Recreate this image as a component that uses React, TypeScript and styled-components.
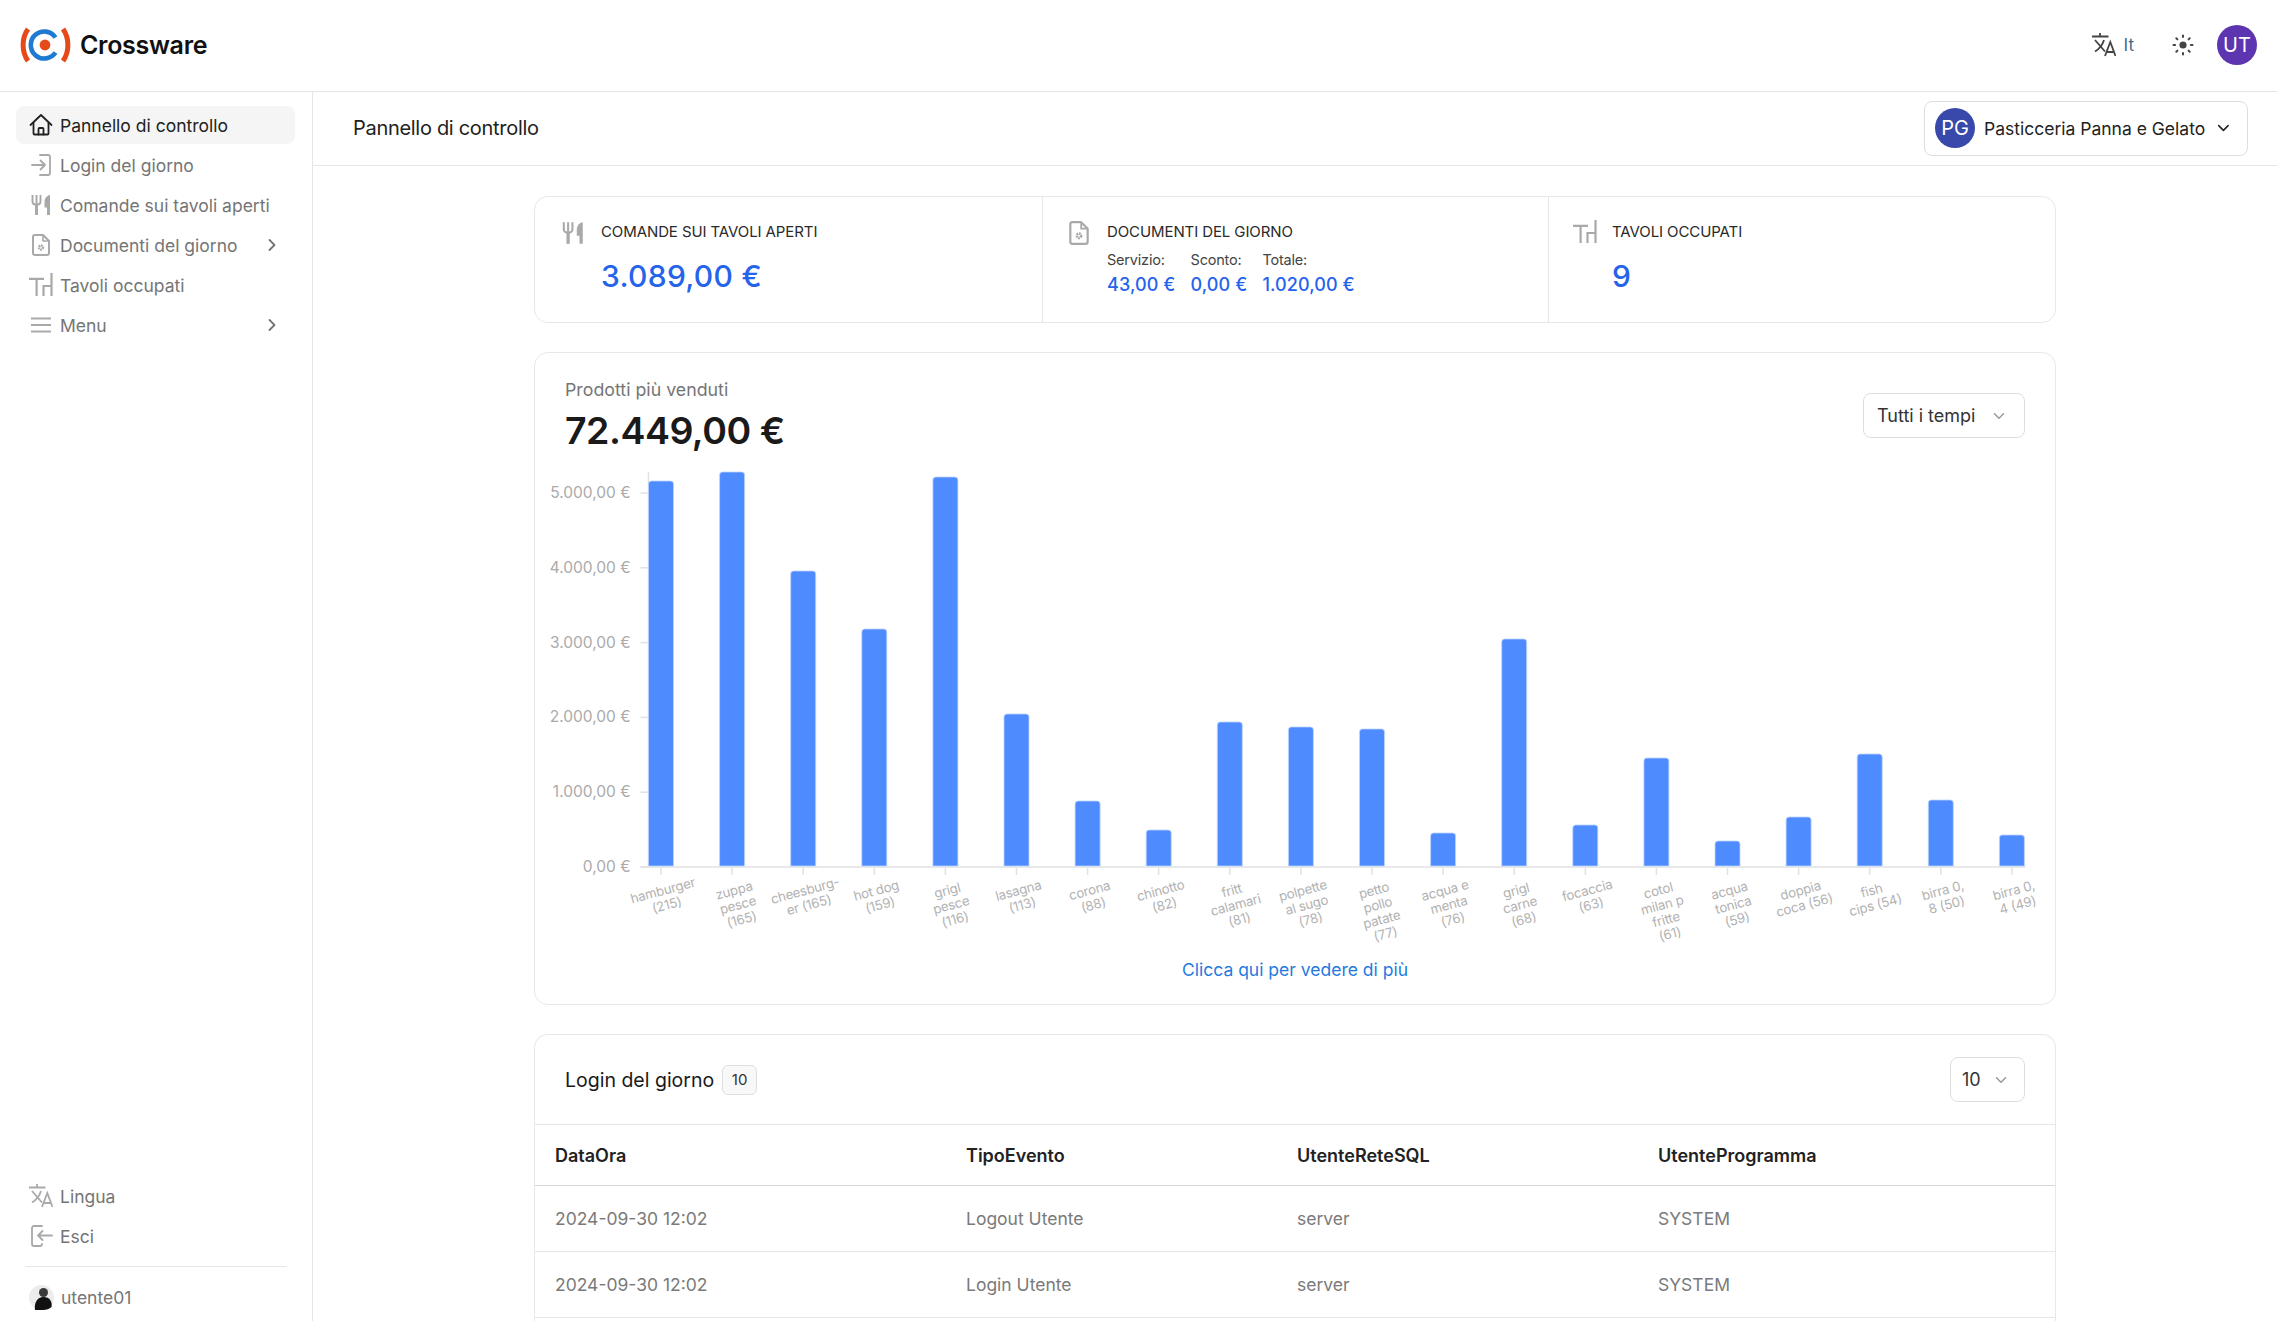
import React from "react";
import styled, { createGlobalStyle } from "styled-components";
import { ChevronDown, ChevronRight } from "lucide-react";

const GlobalStyle = createGlobalStyle`
  html, body {
    margin: 0;
    height: 100%;
    background: #fff;
    font-family: Inter, "Noto Sans", sans-serif;
    color: #222;
  }
  * {
    box-sizing: border-box;
  }
`;

const Page = styled.div`
  height: 100vh;
  overflow: hidden;
  display: flex;
  flex-direction: column;
`;

const TopBar = styled.header`
  height: 91.5px;
  flex: none;
  display: flex;
  align-items: center;
  justify-content: space-between;
  padding: 0 20px;
  border-bottom: 1.5px solid #e6e6e6;
`;

const Brand = styled.div`
  display: flex;
  align-items: center;
  gap: 9px;
  font-size: 25px;
  font-weight: 600;
  letter-spacing: -0.3px;
  color: #111;
`;

const TopActions = styled.div`
  display: flex;
  align-items: center;
`;

const LangButton = styled.div`
  display: flex;
  align-items: center;
  gap: 8px;
  font-size: 17px;
  color: #3d6b8c;
  margin-right: 38px;
  svg {
    color: #444;
  }
`;

const Avatar = styled.div<{ $bg: string }>`
  width: 40px;
  height: 40px;
  border-radius: 50%;
  flex: none;
  display: flex;
  align-items: center;
  justify-content: center;
  background: ${(p) => p.$bg};
  color: #fff;
  font-size: 20px;
`;

const SunWrap = styled.div`
  display: flex;
  color: #444;
  margin-right: 23px;
`;

const Body = styled.div`
  flex: 1;
  display: flex;
  min-height: 0;
`;

const Sidebar = styled.aside`
  width: 313px;
  flex: none;
  display: flex;
  flex-direction: column;
  padding: 14.5px 16px 0;
  border-right: 1.5px solid #e6e6e6;
`;

const NavList = styled.nav`
  display: flex;
  flex-direction: column;
  gap: 2px;
`;

const NavItem = styled.div<{ $active?: boolean }>`
  height: 38px;
  width: 279px;
  display: flex;
  align-items: center;
  gap: 7px;
  padding: 0 13px 0 13px;
  border-radius: 8px;
  font-size: 17.5px;
  background: ${(p) => (p.$active ? "#f5f5f5" : "transparent")};
  color: ${(p) => (p.$active ? "#222" : "#757575")};
  svg.nav {
    color: ${(p) => (p.$active ? "#222" : "#a9a9a9")};
  }
`;

const NavLabel = styled.span`
  flex: 1;
  white-space: nowrap;
`;

const SideBottom = styled.div`
  margin-top: auto;
  padding-bottom: 11px;
`;

const SideRule = styled.hr`
  border: 0;
  border-top: 1.5px solid #e6e6e6;
  margin: 11px 9px 18px;
  width: 262px;
`;

const UserRow = styled.div`
  display: flex;
  align-items: center;
  gap: 7px;
  padding-left: 13px;
  font-size: 17.5px;
  color: #757575;
`;

const Main = styled.main`
  flex: 1;
  min-width: 0;
  display: flex;
  flex-direction: column;
`;

const SubBar = styled.div`
  height: 74.5px;
  flex: none;
  display: flex;
  align-items: center;
  justify-content: space-between;
  padding: 0 29px 0 40px;
  border-bottom: 1.5px solid #e6e6e6;
`;

const PageTitle = styled.h1`
  margin: 0;
  font-size: 20px;
  font-weight: 400;
  letter-spacing: -0.3px;
  color: #222;
`;

const StoreSelect = styled.div`
  width: 324px;
  height: 55px;
  display: flex;
  align-items: center;
  gap: 9px;
  padding: 0 14px 0 10px;
  border: 1.5px solid #dedede;
  border-radius: 8px;
  font-size: 17.5px;
  color: #222;
`;

const StoreName = styled.span`
  flex: 1;
  white-space: nowrap;
`;

const Content = styled.div`
  flex: 1;
  min-height: 0;
  overflow: hidden;
  width: 1522px;
  margin: 0 auto;
  padding: 30px 0 0;
  display: flex;
  flex-direction: column;
  gap: 29px;
`;

const Card = styled.section`
  flex: none;
  background: #fff;
  border: 1.5px solid #e8e8e8;
  border-radius: 14px;
`;

const KpiCard = styled(Card)`
  display: grid;
  grid-template-columns: 508px 506px 1fr;
  height: 127px;
`;

const KpiCell = styled.div<{ $pad: number; $last?: boolean }>`
  display: flex;
  gap: 15px;
  padding: 23px 0 0 ${(p) => p.$pad}px;
  border-right: ${(p) => (p.$last ? "0" : "1.5px solid #e6e6e6")};
  svg {
    color: #a9a9a9;
    flex: none;
  }
`;

const KpiTitle = styled.div`
  margin-top: 2px;
  font-size: 15px;
  line-height: 20px;
  letter-spacing: -0.1px;
  color: #2a2a2a;
`;

const KpiValue = styled.div`
  margin-top: 15px;
  font-size: 30px;
  line-height: 38px;
  font-weight: 500;
  letter-spacing: 0.3px;
  color: #2563eb;
`;

const KpiColumns = styled.div`
  display: flex;
  gap: 15px;
  margin-top: 8px;
`;

const KpiColumn = styled.div`
  display: flex;
  flex-direction: column;
`;

const KpiLabel = styled.span`
  font-size: 14.5px;
  line-height: 20px;
  letter-spacing: -0.2px;
  color: #444;
`;

const KpiAmount = styled.span`
  margin-top: 4px;
  font-size: 18px;
  line-height: 22px;
  font-weight: 500;
  letter-spacing: 0.1px;
  color: #2563eb;
`;

const ChartCard = styled(Card)`
  height: 653px;
  display: flex;
  flex-direction: column;
`;

const ChartHead = styled.div`
  display: flex;
  justify-content: space-between;
  align-items: flex-start;
  padding: 25px 30px 0 30px;
  height: 111.5px;
  flex: none;
`;

const ChartCaption = styled.div`
  font-size: 17.8px;
  line-height: 24px;
  color: #757575;
`;

const ChartTotal = styled.div`
  margin-top: 7px;
  font-size: 37.5px;
  line-height: 44px;
  font-weight: 600;
  letter-spacing: -0.5px;
  color: #1a1a1a;
`;

const SelectBox = styled.div<{ $w: number }>`
  width: ${(p) => p.$w}px;
  height: 45px;
  display: flex;
  align-items: center;
  justify-content: space-between;
  padding: 0 16px 0 13px;
  border: 1.5px solid #dedede;
  border-radius: 8px;
  font-size: 18px;
  color: #333;
  svg {
    color: #999;
  }
`;

const TimeSelect = styled(SelectBox)`
  margin-top: 15px;
`;

const PageSizeSelect = styled(SelectBox)`
  padding: 0 14px 0 11px;
`;

const ChartSvg = styled.svg`
  display: block;
  flex: none;
`;

const MoreLink = styled.a`
  display: block;
  text-align: center;
  font-size: 17.5px;
  color: #1f7ae0;
  margin-top: 4px;
`;

const TableCard = styled(Card)`
  border-bottom: 0;
  border-radius: 14px 14px 0 0;
`;

const TableHead = styled.div`
  height: 90px;
  display: flex;
  align-items: center;
  justify-content: space-between;
  padding: 0 30px;
  border-bottom: 1.5px solid #e6e6e6;
`;

const TableTitle = styled.div`
  display: flex;
  align-items: center;
  gap: 8px;
  font-size: 19.5px;
  color: #1a1a1a;
`;

const CountBadge = styled.span`
  width: 35px;
  height: 30px;
  display: flex;
  align-items: center;
  justify-content: center;
  font-size: 15px;
  background: #f8f8f8;
  border: 1.5px solid #dedede;
  border-radius: 6px;
  color: #333;
`;

const LogTable = styled.div`
  display: flex;
  flex-direction: column;
`;

const LogRow = styled.div<{ $head?: boolean }>`
  height: ${(p) => (p.$head ? "61px" : "66px")};
  display: grid;
  grid-template-columns: 411px 331px 361px 1fr;
  align-items: center;
  padding-left: 20px;
  font-size: ${(p) => (p.$head ? "18px" : "17.5px")};
  font-weight: ${(p) => (p.$head ? 600 : 400)};
  color: ${(p) => (p.$head ? "#222" : "#7a7a7a")};
  border-bottom: 1.5px solid ${(p) => (p.$head ? "#d8d8d8" : "#e6e6e6")};
`;

const Logo = () => (
  <svg width="51" height="36" viewBox="0 0 51 36" fill="none">
    <path d="M8 2C1.5 11 1.5 25 8 34" stroke="#e64a19" strokeWidth="5" />
    <path d="M43 2c6.5 9 6.5 23 0 32" stroke="#e64a19" strokeWidth="5" />
    <path d="M35.5 10.5a13.5 13.5 0 1 0 0 15" stroke="#1f7ad1" strokeWidth="4.6" />
    <circle cx="25" cy="18" r="5.4" fill="#e64a19" />
  </svg>
);

const HomeIcon = () => (
  <svg className="nav" width="24" height="24" viewBox="0 0 24 24" fill="none" stroke="currentColor" strokeWidth="1.8" strokeLinejoin="round" strokeLinecap="round">
    <path d="M1.5 12 12 2l10.5 10" />
    <path d="M4.5 10v10.5a1 1 0 0 0 1 1h13a1 1 0 0 0 1-1V10" />
    <path d="M9.5 21.5V16a1 1 0 0 1 1-1h3a1 1 0 0 1 1 1v5.5" />
  </svg>
);

const LoginIcon = () => (
  <svg className="nav" width="24" height="24" viewBox="0 0 24 24" fill="none" stroke="currentColor" strokeWidth="1.8" strokeLinecap="round" strokeLinejoin="round">
    <path d="M11 2h8a2 2 0 0 1 2 2v16a2 2 0 0 1-2 2h-8" />
    <path d="M3 12h13M11.5 7.5 16 12l-4.5 4.5" />
  </svg>
);

const ForkIcon = ({ size = 24 }: { size?: number }) => (
  <svg className="nav" width={size} height={size} viewBox="0 0 24 24" fill="none" stroke="currentColor" strokeWidth="1.9">
    <path d="M3.5 2v6.5a3 3 0 0 0 3 3h2a3 3 0 0 0 3-3V2M7.5 2v9" />
    <path d="M7.5 11v11" strokeWidth="3" />
    <path d="M21 2c-3 .5-5.5 3-5.5 7v5.5H18V22h3z" fill="currentColor" stroke="none" />
  </svg>
);

const DocIcon = ({ size = 24 }: { size?: number }) => (
  <svg className="nav" width={size} height={size} viewBox="0 0 24 24" fill="none" stroke="currentColor" strokeWidth="2" strokeLinejoin="round">
    <path d="M6 2h8l6 6v12a2 2 0 0 1-2 2H6a2 2 0 0 1-2-2V4a2 2 0 0 1 2-2z" />
    <path d="M14 2v6h6" strokeWidth="1.6" />
    <circle cx="12" cy="14.5" r="2" strokeWidth="2.4" strokeDasharray="1.5 .6" />
  </svg>
);

const TablesIcon = ({ size = 24 }: { size?: number }) => (
  <svg className="nav" width={size} height={size} viewBox="0 0 24 24" fill="none" stroke="currentColor" strokeWidth="2.2">
    <path d="M0 5.8h15M7.6 5.8V23" />
    <path d="M22.5 0v23M22.5 13h-8v10" />
  </svg>
);

const MenuIcon = () => (
  <svg className="nav" width="24" height="24" viewBox="0 0 24 24" fill="none" stroke="currentColor" strokeWidth="1.8">
    <path d="M2 5.5h20M2 12h20M2 18.5h20" />
  </svg>
);

const TranslateIcon = () => (
  <svg className="nav" width="24" height="24" viewBox="0 0 24 24" fill="none" stroke="currentColor" strokeWidth="1.8">
    <path d="M0 3.5h16.5M8 0v3.5" />
    <path d="M3 7l10 11.5M12 7c-1.5 5-4 8.5-9 11.5" />
    <path d="M13 23 18.3 9l5.2 14M14.5 19H22" />
  </svg>
);

const LogoutIcon = () => (
  <svg className="nav" width="24" height="24" viewBox="0 0 24 24" fill="none" stroke="currentColor" strokeWidth="1.8" strokeLinecap="round" strokeLinejoin="round">
    <path d="M13 2H5a2 2 0 0 0-2 2v16a2 2 0 0 0 2 2h6a2 2 0 0 0 2-2" />
    <path d="M23 11.5H9M13.5 7 9 11.5l4.5 4.5" />
  </svg>
);

const SunIcon = () => (
  <svg width="22" height="22" viewBox="0 0 22 22" fill="currentColor" stroke="currentColor" strokeWidth="2" strokeLinecap="round">
    <circle cx="11" cy="11" r="3.6" stroke="none" />
    <path d="M11 1.5v1.6M11 18.9v1.6M1.5 11h1.6M18.9 11h1.6M4.3 4.3l1.1 1.1M16.6 16.6l1.1 1.1M4.3 17.7l1.1-1.1M16.6 5.4l1.1-1.1" />
  </svg>
);

const UserPhoto = () => (
  <svg width="25" height="25" viewBox="0 0 25 25">
    <circle cx="12.5" cy="12.5" r="12.5" fill="#ececec" />
    <circle cx="14.5" cy="7.5" r="4.5" fill="#3a3a3a" />
    <path d="M6 25c-1-7 2-13 8.5-13s9 5 8 10c-2 2-5 3-8.5 3z" fill="#111" />
  </svg>
);

const bars = [
  { top: 481, lines: ["hamburger", "(215)"] },
  { top: 472, lines: ["zuppa", "pesce", "(165)"] },
  { top: 571, lines: ["cheesburg-", "er (165)"] },
  { top: 629, lines: ["hot dog", "(159)"] },
  { top: 477, lines: ["grigl", "pesce", "(116)"] },
  { top: 714, lines: ["lasagna", "(113)"] },
  { top: 801, lines: ["corona", "(88)"] },
  { top: 830, lines: ["chinotto", "(82)"] },
  { top: 722, lines: ["fritt", "calamari", "(81)"] },
  { top: 727, lines: ["polpette", "al sugo", "(78)"] },
  { top: 729, lines: ["petto", "pollo", "patate", "(77)"] },
  { top: 833, lines: ["acqua e", "menta", "(76)"] },
  { top: 639, lines: ["grigl", "carne", "(68)"] },
  { top: 825, lines: ["focaccia", "(63)"] },
  { top: 758, lines: ["cotol", "milan p", "fritte", "(61)"] },
  { top: 841, lines: ["acqua", "tonica", "(59)"] },
  { top: 817, lines: ["doppia", "coca (56)"] },
  { top: 754, lines: ["fish", "cips (54)"] },
  { top: 800, lines: ["birra 0,", "8 (50)"] },
  { top: 835, lines: ["birra 0,", "4 (49)"] },
];

const yTicks = ["0,00 €", "1.000,00 €", "2.000,00 €", "3.000,00 €", "4.000,00 €", "5.000,00 €"];

// the svg starts at page x 535.5, y 465, the numbers below come from the page
const OX = 535.5;
const OY = 465;
const BASE = 866;

const BarChart = () => (
  <ChartSvg width="1519" height="490" viewBox="0 0 1519 490">
    <line x1={649 - OX} x2={649 - OX} y1={472 - OY} y2={BASE - OY} stroke="#e2e2e2" strokeWidth="1.5" />
    <line x1={641 - OX} x2={2026 - OX} y1={BASE - OY + 1} y2={BASE - OY + 1} stroke="#e2e2e2" strokeWidth="1.5" />
    {yTicks.map((t, i) => {
      const y = BASE - OY - i * 74.8;
      return (
        <g key={t}>
          <line x1={641 - OX} x2={649 - OX} y1={y + 1} y2={y + 1} stroke="#e2e2e2" strokeWidth="1.5" />
          <text x={631 - OX} y={y + 6} textAnchor="end" fontSize="15.5" fontFamily="Inter, sans-serif" fill="#aaaaaa">
            {t}
          </text>
        </g>
      );
    })}
    {bars.map((b, i) => {
      const x = 649 + i * 71.1 - OX;
      const tick = x + 12.5;
      const h = BASE - b.top;
      return (
        <g key={i}>
          <path
            d={`M${x} ${BASE - OY}v-${h - 3}q0-3 3-3h19q3 0 3 3v${h - 3}z`}
            fill="#4d8bff"
            stroke="#bcd3ff"
            strokeWidth="0.8"
          />
          <line x1={tick} x2={tick} y1={BASE - OY + 2} y2={BASE - OY + 9} stroke="#e2e2e2" strokeWidth="1.5" />
          <g transform={`translate(${tick + 2} ${891 - OY}) rotate(-15)`}>
            {b.lines.map((l, j) => (
              <text
                key={j}
                x="0"
                y={4 + j * 15}
                textAnchor="middle"
                fontSize="13.2"
                fontFamily="Inter, sans-serif"
                letterSpacing="-0.2"
                fill="#b2b2b2"
              >
                {l}
              </text>
            ))}
          </g>
        </g>
      );
    })}
  </ChartSvg>
);

const rows = [
  ["2024-09-30 12:02", "Logout Utente", "server", "SYSTEM"],
  ["2024-09-30 12:02", "Login Utente", "server", "SYSTEM"],
  ["2024-09-30 12:02", "Login Utente", "server", "SYSTEM"],
];

export default function App() {
  return (
    <Page>
      <GlobalStyle />
      <TopBar>
        <Brand>
          <Logo />
          Crossware
        </Brand>
        <TopActions>
          <LangButton>
            <TranslateIcon />
            It
          </LangButton>
          <SunWrap>
            <SunIcon />
          </SunWrap>
          <Avatar $bg="#5e35b1">UT</Avatar>
        </TopActions>
      </TopBar>
      <Body>
        <Sidebar>
          <NavList>
            <NavItem $active>
              <HomeIcon />
              <NavLabel>Pannello di controllo</NavLabel>
            </NavItem>
            <NavItem>
              <LoginIcon />
              <NavLabel>Login del giorno</NavLabel>
            </NavItem>
            <NavItem>
              <ForkIcon />
              <NavLabel>Comande sui tavoli aperti</NavLabel>
            </NavItem>
            <NavItem>
              <DocIcon />
              <NavLabel>Documenti del giorno</NavLabel>
              <ChevronRight size={20} strokeWidth={2.2} />
            </NavItem>
            <NavItem>
              <TablesIcon />
              <NavLabel>Tavoli occupati</NavLabel>
            </NavItem>
            <NavItem>
              <MenuIcon />
              <NavLabel>Menu</NavLabel>
              <ChevronRight size={20} strokeWidth={2.2} />
            </NavItem>
          </NavList>
          <SideBottom>
            <NavList>
              <NavItem>
                <TranslateIcon />
                <NavLabel>Lingua</NavLabel>
              </NavItem>
              <NavItem>
                <LogoutIcon />
                <NavLabel>Esci</NavLabel>
              </NavItem>
            </NavList>
            <SideRule />
            <UserRow>
              <UserPhoto />
              utente01
            </UserRow>
          </SideBottom>
        </Sidebar>
        <Main>
          <SubBar>
            <PageTitle>Pannello di controllo</PageTitle>
            <StoreSelect>
              <Avatar $bg="#3949ab">PG</Avatar>
              <StoreName>Pasticceria Panna e Gelato</StoreName>
              <ChevronDown size={20} color="#222" />
            </StoreSelect>
          </SubBar>
          <Content>
            <KpiCard>
              <KpiCell $pad={25}>
                <ForkIcon size={26} />
                <div>
                  <KpiTitle>COMANDE SUI TAVOLI APERTI</KpiTitle>
                  <KpiValue>3.089,00 €</KpiValue>
                </div>
              </KpiCell>
              <KpiCell $pad={23}>
                <DocIcon size={26} />
                <div>
                  <KpiTitle>DOCUMENTI DEL GIORNO</KpiTitle>
                  <KpiColumns>
                    <KpiColumn>
                      <KpiLabel>Servizio:</KpiLabel>
                      <KpiAmount>43,00 €</KpiAmount>
                    </KpiColumn>
                    <KpiColumn>
                      <KpiLabel>Sconto:</KpiLabel>
                      <KpiAmount>0,00 €</KpiAmount>
                    </KpiColumn>
                    <KpiColumn>
                      <KpiLabel>Totale:</KpiLabel>
                      <KpiAmount>1.020,00 €</KpiAmount>
                    </KpiColumn>
                  </KpiColumns>
                </div>
              </KpiCell>
              <KpiCell $pad={24} $last>
                <TablesIcon size={24} />
                <div>
                  <KpiTitle>TAVOLI OCCUPATI</KpiTitle>
                  <KpiValue>9</KpiValue>
                </div>
              </KpiCell>
            </KpiCard>
            <ChartCard>
              <ChartHead>
                <div>
                  <ChartCaption>Prodotti più venduti</ChartCaption>
                  <ChartTotal>72.449,00 €</ChartTotal>
                </div>
                <TimeSelect $w={162}>
                  Tutti i tempi
                  <ChevronDown size={18} />
                </TimeSelect>
              </ChartHead>
              <BarChart />
              <MoreLink>Clicca qui per vedere di più</MoreLink>
            </ChartCard>
            <TableCard>
              <TableHead>
                <TableTitle>
                  Login del giorno
                  <CountBadge>10</CountBadge>
                </TableTitle>
                <PageSizeSelect $w={75}>
                  10
                  <ChevronDown size={18} />
                </PageSizeSelect>
              </TableHead>
              <LogTable>
                <LogRow $head>
                  <span>DataOra</span>
                  <span>TipoEvento</span>
                  <span>UtenteReteSQL</span>
                  <span>UtenteProgramma</span>
                </LogRow>
                {rows.map((r, i) => (
                  <LogRow key={i}>
                    {r.map((c, j) => (
                      <span key={j}>{c}</span>
                    ))}
                  </LogRow>
                ))}
              </LogTable>
            </TableCard>
          </Content>
        </Main>
      </Body>
    </Page>
  );
}
